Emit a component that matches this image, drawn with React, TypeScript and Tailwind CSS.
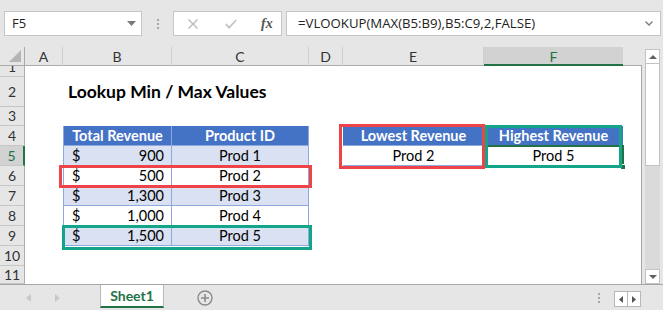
import React from 'react';

const HDR = 'bg-[#4472c4] text-white font-bold';
const BAND = 'bg-[#d9e1f2]';

function RowHead({ n, sel, clipTop }: { n: number; sel?: boolean; clipTop?: number }) {
  return (
    <div
      className={
        'w-[25px] shrink-0 h-full overflow-hidden border-b border-[#c6c6c6] ' +
        (sel ? 'bg-[#d2d2d2] border-r-2 border-r-[#217346] text-[#217346]' : 'bg-[#e6e6e6] border-r border-r-[#ababab] text-[#333]')
      }
    >
      <div
        className={'flex items-center justify-center text-[14px] leading-none ' + (clipTop ? 'h-[20px] -mt-[9px]' : 'h-full')}
      >
        {n}
      </div>
    </div>
  );
}

function Money({ v, band }: { v: string; band?: boolean }) {
  return (
    <div
      className={
        'w-[109px] shrink-0 h-full flex items-center justify-between pl-[8px] pr-[7px] border-l border-r border-b border-[#8ea9db] text-[14.5px] text-black ' +
        (band ? BAND : 'bg-white')
      }
    >
      <span>$</span>
      <span>{v}</span>
    </div>
  );
}

function Prod({ v, band }: { v: string; band?: boolean }) {
  return (
    <div
      className={
        'w-[137px] shrink-0 h-full flex items-center justify-center border-r border-b border-[#8ea9db] text-[14.5px] text-black ' +
        (band ? BAND : 'bg-white')
      }
    >
      {v}
    </div>
  );
}

export default function App() {
  return (
    <div className="w-[663px] h-[310px] bg-[#e6e6e6] flex flex-col overflow-hidden font-['Lato',sans-serif] select-none">
      {/* Formula bar */}
      <div className="h-[47px] shrink-0 flex items-start pt-[11px] pl-[4px]">
        <div className="w-[138px] h-[25px] bg-white border border-[#c6c6c6] flex items-center justify-between pl-[7px] pr-[5px] font-['Open_Sans',sans-serif] text-[13px] text-[#222]">
          <span>F5</span>
          <svg width="9" height="5" viewBox="0 0 9 5">
            <path d="M0 0 H9 L4.5 5 Z" fill="#7a7a7a" />
          </svg>
        </div>
        <div className="w-[31px] h-[25px] flex flex-col items-center justify-center gap-[2px]">
          <div className="w-[2px] h-[2px] bg-[#a6a6a6]" />
          <div className="w-[2px] h-[2px] bg-[#a6a6a6]" />
          <div className="w-[2px] h-[2px] bg-[#a6a6a6]" />
        </div>
        <div className="w-[109px] h-[25px] bg-white border border-[#c6c6c6] flex items-center">
          <svg className="ml-[14px]" width="10" height="10" viewBox="0 0 10 10">
            <path d="M0.5 0.5 L9.5 9.5 M9.5 0.5 L0.5 9.5" stroke="#b9b9b9" strokeWidth="1.3" fill="none" />
          </svg>
          <svg className="ml-[27px]" width="12" height="10" viewBox="0 0 12 10">
            <path d="M0.8 5.2 L4.2 8.6 L11.2 1" stroke="#c4c4c4" strokeWidth="1.8" fill="none" />
          </svg>
          <span className="ml-[24px] font-['Liberation_Serif',serif] italic font-bold text-[14px] text-[#555] leading-none">
            fx
          </span>
        </div>
        <div className="ml-[4px] w-[375px] h-[25px] bg-white border border-[#c6c6c6] flex items-center justify-between pl-[11px] pr-[7px]">
          <span className="font-['Open_Sans',sans-serif] text-[13.2px] text-[#222] whitespace-nowrap">
            =VLOOKUP(MAX(B5:B9),B5:C9,2,FALSE)
          </span>
          <svg width="8" height="5" viewBox="0 0 8 5">
            <path d="M0.5 0.5 L4 4 L7.5 0.5" stroke="#7a7a7a" strokeWidth="1.3" fill="none" />
          </svg>
        </div>
      </div>

      {/* Middle: sheet + scrollbar */}
      <div className="h-[237px] shrink-0 flex">
        <div className="w-[642px] shrink-0 relative flex flex-col">
          {/* column headers */}
          <div className="h-[19px] shrink-0 flex text-[14px] text-[#333]">
            <div className="w-[25px] shrink-0 h-full border-r border-b border-[#ababab] flex items-end justify-end pr-[3px] pb-[3px]">
              <svg width="12" height="12" viewBox="0 0 12 12">
                <path d="M12 0 V12 H0 Z" fill="#b5b5b5" />
              </svg>
            </div>
            <div className="w-[38px] shrink-0 h-full border-r border-b border-r-[#cfcfcf] border-b-[#ababab] flex items-center justify-center">A</div>
            <div className="w-[109px] shrink-0 h-full border-r border-b border-r-[#cfcfcf] border-b-[#ababab] flex items-center justify-center">B</div>
            <div className="w-[137px] shrink-0 h-full border-r border-b border-r-[#cfcfcf] border-b-[#ababab] flex items-center justify-center">C</div>
            <div className="w-[34px] shrink-0 h-full border-r border-b border-r-[#cfcfcf] border-b-[#ababab] flex items-center justify-center">D</div>
            <div className="w-[141px] shrink-0 h-full border-r border-b border-r-[#cfcfcf] border-b-[#ababab] flex items-center justify-center">E</div>
            <div className="w-[139px] shrink-0 h-full bg-[#d2d2d2] border-b-2 border-[#217346] flex items-center justify-center text-[#217346] pt-[1px]">F</div>
            <div className="flex-1 h-full border-b border-[#ababab]" />
          </div>

          {/* body */}
          <div className="flex-1 flex flex-col border-r border-[#a6a6a6] bg-white">
            {/* row 1 (partly scrolled) */}
            <div className="h-[11px] shrink-0 flex">
              <RowHead n={1} clipTop={9} />
            </div>
            {/* row 2 */}
            <div className="h-[30px] shrink-0 flex">
              <RowHead n={2} />
              <div className="w-[38px] shrink-0" />
              <div className="flex items-center pl-[5px] pt-[1px] whitespace-nowrap font-bold text-[17.5px] text-black">
                Lookup Min / Max Values
              </div>
            </div>
            {/* row 3 */}
            <div className="h-[19px] shrink-0 flex">
              <RowHead n={3} />
            </div>
            {/* row 4 */}
            <div className="h-[20px] shrink-0 flex">
              <RowHead n={4} />
              <div className="w-[38px] shrink-0" />
              <div className={'w-[109px] shrink-0 h-full flex items-center justify-center border-l border-r border-b border-[#8ea9db] text-[14.5px] ' + HDR}>
                Total Revenue
              </div>
              <div className={'w-[137px] shrink-0 h-full flex items-center justify-center border-r border-b border-[#8ea9db] text-[14.5px] ' + HDR}>
                Product ID
              </div>
              <div className="w-[34px] shrink-0" />
              <div className={'w-[141px] shrink-0 h-full flex items-center justify-center border-b border-[#8ea9db] text-[14.5px] ' + HDR}>
                Lowest Revenue
              </div>
              <div className={'w-[139px] shrink-0 h-full flex items-center justify-center text-[14.5px] ' + HDR}>
                Highest Revenue
              </div>
            </div>
            {/* row 5 */}
            <div className="h-[20px] shrink-0 flex">
              <RowHead n={5} sel />
              <div className="w-[38px] shrink-0" />
              <Money v="900" band />
              <Prod v="Prod 1" band />
              <div className="w-[34px] shrink-0" />
              <div className="w-[141px] shrink-0 h-full flex items-center justify-center border-b border-[#8ea9db] text-[14.5px] text-black bg-white">
                Prod 2
              </div>
              <div className="w-[139px] shrink-0 h-full flex items-center justify-center text-[14.5px] text-black bg-white">
                Prod 5
              </div>
            </div>
            {/* row 6 */}
            <div className="h-[20px] shrink-0 flex">
              <RowHead n={6} />
              <div className="w-[38px] shrink-0" />
              <Money v="500" />
              <Prod v="Prod 2" />
            </div>
            {/* row 7 */}
            <div className="h-[20px] shrink-0 flex">
              <RowHead n={7} />
              <div className="w-[38px] shrink-0" />
              <Money v="1,300" band />
              <Prod v="Prod 3" band />
            </div>
            {/* row 8 */}
            <div className="h-[20px] shrink-0 flex">
              <RowHead n={8} />
              <div className="w-[38px] shrink-0" />
              <Money v="1,000" />
              <Prod v="Prod 4" />
            </div>
            {/* row 9 */}
            <div className="h-[20px] shrink-0 flex">
              <RowHead n={9} />
              <div className="w-[38px] shrink-0" />
              <Money v="1,500" band />
              <Prod v="Prod 5" band />
            </div>
            {/* row 10 */}
            <div className="h-[20px] shrink-0 flex">
              <RowHead n={10} />
            </div>
            {/* row 11 */}
            <div className="flex-1 flex">
              <RowHead n={11} />
            </div>
          </div>

          {/* cell selection F5 */}
          <div className="absolute left-[484px] top-[98px] w-[140px] h-[23px] border-2 border-[#217346]" />
          <div className="absolute left-[620px] top-[117px] w-[6px] h-[6px] bg-[#217346] border border-white" />

          {/* highlight boxes */}
          <div className="absolute left-[59px] top-[118px] w-[253px] h-[23px] border-[3px] border-[#ee4349]" />
          <div className="absolute left-[62px] top-[178px] w-[250px] h-[25px] border-[3px] border-[#13a589]" />
          <div className="absolute left-[339px] top-[77px] w-[146px] h-[45px] border-[3px] border-[#ee4349]" />
          <div className="absolute left-[485px] top-[78px] w-[137px] h-[43px] border-[3px] border-[#13a589]" />
        </div>

        {/* vertical scrollbar */}
        <div className="flex-1 flex flex-col pl-[3px] pr-[3px] pt-[2px]">
          <div className="h-[15px] shrink-0 bg-white border border-[#c2c2c2] flex items-center justify-center">
            <svg width="8" height="4" viewBox="0 0 8 4">
              <path d="M0 4 L4 0 L8 4 Z" fill="#606060" />
            </svg>
          </div>
          <div className="h-[102px] shrink-0 bg-white border-x border-b border-[#c2c2c2]" />
          <div className="flex-1 bg-[#dadada]" />
          <div className="h-[15px] shrink-0 bg-white border border-[#c2c2c2] flex items-center justify-center">
            <svg width="8" height="4" viewBox="0 0 8 4">
              <path d="M0 0 L8 0 L4 4 Z" fill="#606060" />
            </svg>
          </div>
        </div>
      </div>

      {/* sheet tabs bar */}
      <div className="flex-1 flex border-t border-[#a6a6a6]">
        <div className="w-[100px] shrink-0 flex items-center">
          <svg className="ml-[26px]" width="5" height="8" viewBox="0 0 5 8">
            <path d="M5 0 V8 L0 4 Z" fill="#c8c8c8" />
          </svg>
          <svg className="ml-[24px]" width="5" height="8" viewBox="0 0 5 8">
            <path d="M0 0 V8 L5 4 Z" fill="#c8c8c8" />
          </svg>
        </div>
        <div className="w-[64px] shrink-0 h-[23px] bg-white border-x border-[#b8b8b8] border-b-2 border-b-[#217346] flex items-center justify-center font-bold text-[14px] text-[#217346]">
          Sheet1
        </div>
        <div className="ml-[33px] flex items-center">
          <svg width="16" height="16" viewBox="0 0 16 16">
            <circle cx="8" cy="8" r="7" fill="none" stroke="#8a8a8a" strokeWidth="1.4" />
            <path d="M8 4 V12 M4 8 H12" stroke="#8a8a8a" strokeWidth="1.6" />
          </svg>
        </div>
        <div className="flex-1" />
        <div className="flex flex-col items-center justify-center gap-[2px] mr-[14px]">
          <div className="w-[2px] h-[2px] bg-[#a6a6a6]" />
          <div className="w-[2px] h-[2px] bg-[#a6a6a6]" />
          <div className="w-[2px] h-[2px] bg-[#a6a6a6]" />
        </div>
        <div className="flex items-start pt-[6px] mr-[22px]">
          <div className="w-[14px] h-[16px] bg-white border border-[#b8b8b8] flex items-center justify-center">
            <svg width="4" height="7" viewBox="0 0 4 7">
              <path d="M4 0 V7 L0 3.5 Z" fill="#555" />
            </svg>
          </div>
          <div className="w-[13px] h-[16px] bg-white border-y border-r border-[#b8b8b8] flex items-center justify-center">
            <svg width="4" height="7" viewBox="0 0 4 7">
              <path d="M0 0 V7 L4 3.5 Z" fill="#555" />
            </svg>
          </div>
        </div>
      </div>
    </div>
  );
}
